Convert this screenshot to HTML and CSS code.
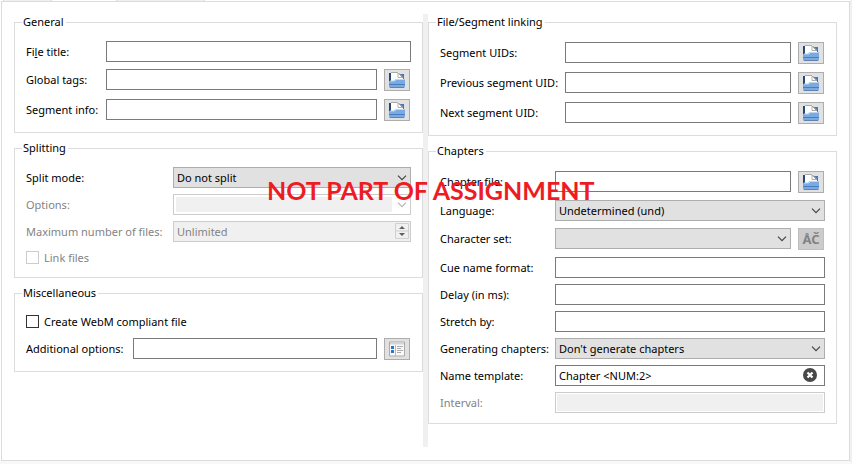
FILE: index.html
```html
<!DOCTYPE html>
<html lang="en">
<head>
<meta charset="utf-8">
<title>Output settings</title>
<link rel="stylesheet" href="styles.css">
</head>
<body>
<svg class="sprite" aria-hidden="true">
  <symbol id="chevron" viewBox="0 0 10 6"><path d="M1 .7l4 4 4-4" fill="none" stroke="currentColor" stroke-width="1.2"/></symbol>
  <symbol id="folder" viewBox="0 0 16 16">
    <path d="M0 1h3v9H0z" fill="#24487a"/>
    <path d="M10 2h5v7h-5z" fill="#3f78bd"/>
    <path d="M2 .5h8L14 5v4H2z" fill="#fff"/>
    <path d="M2 .5h7" stroke="#aaa" fill="none"/>
    <path d="M9 1v4.500h4.500z" fill="#fff" stroke="#999" stroke-width=".8"/>
    <path d="M10.500 1.500l4 4.500" stroke="#55657c" stroke-width=".8" fill="none"/>
    <path d="M0 9h5l1-1.500h10V15.500H0z" fill="#7ba9e2"/>
    <path d="M1 9h5l1-1.500h8" stroke="#b9d8ef" fill="none"/>
    <path d="M0 12.500h16" stroke="#4a7cc0"/>
    <path d="M1 15.500h14" stroke="#6283ad"/>
  </symbol>
</svg>
<nav class="tabs" aria-label="Tabs"><span class="tab tab-first"></span><span class="tab tab-last"></span></nav>
<main class="panel">
  <form class="column">
    <fieldset>
      <legend>General</legend>
      <div class="row general"><label for="title">Fi<u>l</u>e title:</label><input id="title" type="text"></div>
      <div class="row tall general"><label for="tags">Global tags:</label><input id="tags" type="text"><button type="button" aria-label="Browse"><svg class="icon"><use href="#folder"/></svg></button></div>
      <div class="row tall general"><label for="info">Segment info:</label><input id="info" type="text"><button type="button" aria-label="Browse"><svg class="icon"><use href="#folder"/></svg></button></div>
    </fieldset>
    <fieldset>
      <legend>Splitting</legend>
      <div class="row splitting"><label for="mode">Split mode:</label><span class="combo"><select id="mode"><option>Do not split</option></select><svg class="chevron"><use href="#chevron"/></svg></span></div>
      <div class="row splitting off"><label for="options">Options:</label><span class="combo"><select id="options" class="editable" disabled><option></option></select><svg class="chevron"><use href="#chevron"/></svg></span></div>
      <div class="row splitting off"><label for="max">Maximum number of files:</label><span class="combo"><input id="max" type="text" value="Unlimited" disabled><svg class="spinner" viewBox="0 0 14 16"><path d="M.5.500h13v15H.5zM0 8h14" fill="#f0f0f0" stroke="#d0d0d0"/><path d="M4 6l3-3 3 3zM4 10l3 3 3-3z" fill="#606060"/></svg></span></div>
      <div class="row check off"><input id="link" type="checkbox" disabled><label for="link">Link files</label></div>
    </fieldset>
    <fieldset>
      <legend>Miscellaneous</legend>
      <div class="row check"><input id="webm" type="checkbox"><label for="webm">Create WebM compliant file</label></div>
      <div class="row tall misc"><label for="extra">Additional options:</label><input id="extra" type="text"><button type="button" aria-label="Edit options"><svg class="icon" viewBox="0 0 16 16"><path d="M.5 1h15v14H.5z" fill="#fafafa" stroke="#aaa"/><path d="M1 2.500h14" stroke="#d3d3d8" stroke-width="2"/><path d="M6.500 4v11" stroke="#bbb"/><path d="M2 5h3v3H2zM2 9h3v3H2z" fill="#2877cc"/><path d="M8 5.500h6M8 7.500h4M8 9.500h6M8 11.500h4" stroke="#aaa"/></svg></button></div>
    </fieldset>
  </form>
  <div class="splitter"></div>
  <form class="column">
    <fieldset>
      <legend>File/Segment linking</legend>
      <div class="row tall linking"><label for="uids">Segment UIDs:</label><input id="uids" type="text"><button type="button" aria-label="Browse"><svg class="icon"><use href="#folder"/></svg></button></div>
      <div class="row tall linking"><label for="prev">Previous segment UID:</label><input id="prev" type="text"><button type="button" aria-label="Browse"><svg class="icon"><use href="#folder"/></svg></button></div>
      <div class="row tall linking"><label for="next">Next segment UID:</label><input id="next" type="text"><button type="button" aria-label="Browse"><svg class="icon"><use href="#folder"/></svg></button></div>
    </fieldset>
    <fieldset>
      <legend>Chapters</legend>
      <div class="row tall chapters"><label for="chapter">Chapter file:</label><input id="chapter" type="text"><button type="button" aria-label="Browse"><svg class="icon"><use href="#folder"/></svg></button></div>
      <div class="row chapters"><label for="lang">Language:</label><span class="combo"><select id="lang"><option>Undetermined (und)</option></select><svg class="chevron"><use href="#chevron"/></svg></span></div>
      <div class="row tall chapters"><label for="charset">Character set:</label><span class="combo"><select id="charset"><option></option></select><svg class="chevron"><use href="#chevron"/></svg></span><button type="button" class="charset" aria-label="Preview characters" disabled>ÅČ</button></div>
      <div class="row chapters"><label for="cue">Cue name format:</label><input id="cue" type="text"></div>
      <div class="row chapters"><label for="delay">Delay (in ms):</label><input id="delay" type="text"></div>
      <div class="row chapters"><label for="stretch">Stretch by:</label><input id="stretch" type="text"></div>
      <div class="row chapters"><label for="generate">Generating chapters:</label><span class="combo"><select id="generate"><option>Don't generate chapters</option></select><svg class="chevron"><use href="#chevron"/></svg></span></div>
      <div class="row chapters"><label for="template">Name template:</label><span class="combo"><input id="template" type="text" value="Chapter &lt;NUM:2&gt;"><button type="button" class="clear" aria-label="Clear"><svg viewBox="0 0 14 14"><circle cx="7" cy="7" r="7" fill="#484848"/><path d="M4.500 4.500l5 5M9.500 4.500l-5 5" stroke="#fff" stroke-width="2.200"/></svg></button></span></div>
      <div class="row chapters off"><label for="interval">Interval:</label><input id="interval" class="inset" type="text" disabled></div>
    </fieldset>
  </form>
</main>
<div class="watermark">NOT PART OF ASSIGNMENT</div>
</body>
</html>
```

FILE: styles.css
```css
* { box-sizing: border-box; }

body {
  margin: 0;
  min-height: 100vh;
  display: flex;
  flex-direction: column;
  position: relative;
  background: #fff;
  border-right: 2px solid #f0f0f0;
  border-bottom: 3px solid #f8f8f8;
  color: #000;
  font: 11px/16px "Noto Sans", "Open Sans", sans-serif;
}

.sprite { position: absolute; width: 0; height: 0; }

.tabs { display: flex; gap: 64px; height: 1px; padding-left: 3px; }
.tab { background: #f0f0f0; border: solid #dcdcdc; border-width: 0 1px; }
.tab-first { width: 49px; }
.tab-last { width: 89px; }

.panel {
  flex: 1;
  display: grid;
  grid-template-columns: minmax(0, 1fr) 5px minmax(0, 1fr);
  margin-left: 1px;
  padding: 12px 12px 13px;
  border: 1px solid #dcdcdc;
}

.splitter { background: #f0f0f0; }
.column { display: flex; flex-direction: column; gap: 7px; }

fieldset {
  margin: 0;
  padding: 8px 11px 7px;
  border: 1px solid #dcdcdc;
  min-width: 0;
}
legend { margin-left: -4px; padding: 0 2px 0 1px; line-height: 16px; }

.row { display: flex; align-items: flex-start; padding: 3px 0; }
.tall { padding: 4px 0; }
.row label { flex: none; line-height: 21px; white-space: nowrap; }
.tall label { line-height: 22px; }
.general label { width: 80px; }
.splitting label { width: 147px; }
.misc label { width: 107px; }
.linking label { width: 125px; }
.chapters label { width: 115px; }
.off { color: #838383; }

input[type="text"], select {
  flex: 1;
  min-width: 0;
  width: 100%;
  height: 21px;
  margin: 0;
  padding: 0 3px;
  border: 1px solid #7a7a7a;
  border-radius: 0;
  background: #fff;
  color: #000;
  font: inherit;
}
select { appearance: none; background: #e1e1e1; border-color: #adadad; }
input[type="text"]:disabled, select:disabled {
  border-color: #ccc;
  background: #f0f0f0;
  color: #838383;
  opacity: 1;
}
select.editable:disabled {
  padding: 2px 18px 2px 2px;
  background: #fff linear-gradient(#f0f0f0, #f0f0f0) content-box no-repeat;
}
input.inset:disabled { box-shadow: inset 0 0 0 1px #fff; }

.combo { flex: 1; display: flex; position: relative; min-width: 0; }
.chevron {
  position: absolute;
  right: 4px;
  top: 8px;
  width: 10px;
  height: 6px;
  color: #444;
  pointer-events: none;
}
.off .chevron { color: #b5b5b5; }
.spinner { position: absolute; right: 2px; top: 2px; width: 14px; height: 16px; }

button {
  display: grid;
  place-items: center;
  flex: none;
  width: 26px;
  height: 22px;
  margin: 0 1px 0 7px;
  padding: 0;
  border: 1px solid #adadad;
  background: #e1e1e1;
}
.icon { width: 16px; height: 16px; }
button.charset {
  border-color: #bfbfbf;
  background: #ccc;
  color: #838383;
  font: bold 13px/20px "Noto Sans", sans-serif;
}
button.clear {
  position: absolute;
  right: 8px;
  top: 3px;
  width: 14px;
  height: 14px;
  margin: 0;
  border: 0;
  background: none;
}
.clear svg { width: 14px; height: 14px; }

.check { align-items: center; }
.row.check label { line-height: 19px; }
.check input {
  appearance: none;
  width: 13px;
  height: 13px;
  margin: 0 5px 0 0;
  border: 1px solid #333;
  background: #fff;
}
.check input:disabled { border-color: #ccc; }

.watermark {
  position: absolute;
  left: 267px;
  top: 174px;
  color: #ed1c24;
  font: bold 25px/32px Lato, sans-serif;
  white-space: nowrap;
  pointer-events: none;
}
```
